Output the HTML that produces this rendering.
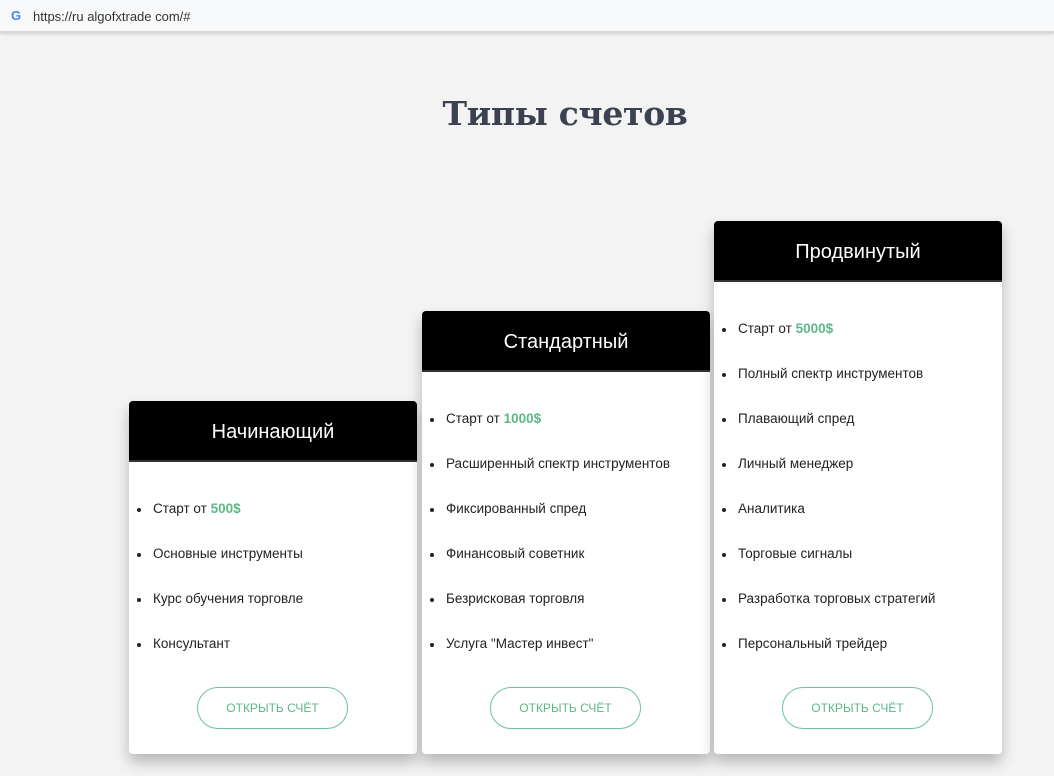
<!DOCTYPE html>
<html><head><meta charset="utf-8"><style>
*{margin:0;padding:0;box-sizing:border-box}
body{width:1054px;height:776px;background:#f3f3f3;font-family:"Liberation Sans","DejaVu Sans",sans-serif;position:relative;overflow:hidden}
.bar{position:absolute;left:0;top:0;width:1054px;height:33px;background:#f8f9fa;border-bottom:2px solid #d8d8d8;box-shadow:0 1px 3px rgba(0,0,0,.15)}
.bar .g{position:absolute;left:11px;top:8px;font-weight:bold;font-size:13px;color:#4285f4}
.bar .u{position:absolute;left:33px;top:9px;font-size:13px;color:#333}
h1{position:absolute;left:0;width:1130px;top:94px;text-align:center;font-family:"DejaVu Serif","Liberation Serif",serif;font-weight:bold;font-size:33px;color:#3b4150;letter-spacing:-0.3px}
.card{position:absolute;width:288px;background:#fff;border-radius:4px;box-shadow:0 8px 14px rgba(0,0,0,.25);overflow:hidden}
.hd{height:61px;background:#000;color:#fff;font-size:20px;text-align:center;line-height:63px;border-bottom:2px solid #333}
ul{list-style:none;padding:0 0 0 8px;margin-top:33px}
li{height:45px;font-size:13.5px;color:#222;position:relative;padding-left:16px;line-height:28px}
li:before{content:"";position:absolute;left:0;top:13px;width:4px;height:4px;border-radius:50%;background:#222}
b{color:#5cb887}
.btn{position:absolute;left:68px;bottom:25px;width:151px;height:42px;border:1px solid #6cc39a;border-radius:21px;text-align:center;line-height:40px;font-size:12px;color:#5cb887}
</style></head><body>
<div class="bar"><span class="g">G</span><span class="u">https://ru algofxtrade com/#</span></div>
<h1>Типы счетов</h1>
<div class="card" style="left:129px;top:401px;height:353px"><div class="hd">Начинающий</div><ul><li>Старт от <b>500$</b></li><li>Основные инструменты</li><li>Курс обучения торговле</li><li>Консультант</li></ul><div class="btn">ОТКРЫТЬ СЧЁТ</div></div>
<div class="card" style="left:422px;top:311px;height:443px"><div class="hd">Стандартный</div><ul><li>Старт от <b>1000$</b></li><li>Расширенный спектр инструментов</li><li>Фиксированный спред</li><li>Финансовый советник</li><li>Безрисковая торговля</li><li>Услуга "Мастер инвест"</li></ul><div class="btn">ОТКРЫТЬ СЧЁТ</div></div>
<div class="card" style="left:714px;top:221px;height:533px"><div class="hd">Продвинутый</div><ul><li>Старт от <b>5000$</b></li><li>Полный спектр инструментов</li><li>Плавающий спред</li><li>Личный менеджер</li><li>Аналитика</li><li>Торговые сигналы</li><li>Разработка торговых стратегий</li><li>Персональный трейдер</li></ul><div class="btn">ОТКРЫТЬ СЧЁТ</div></div>
</body></html>
